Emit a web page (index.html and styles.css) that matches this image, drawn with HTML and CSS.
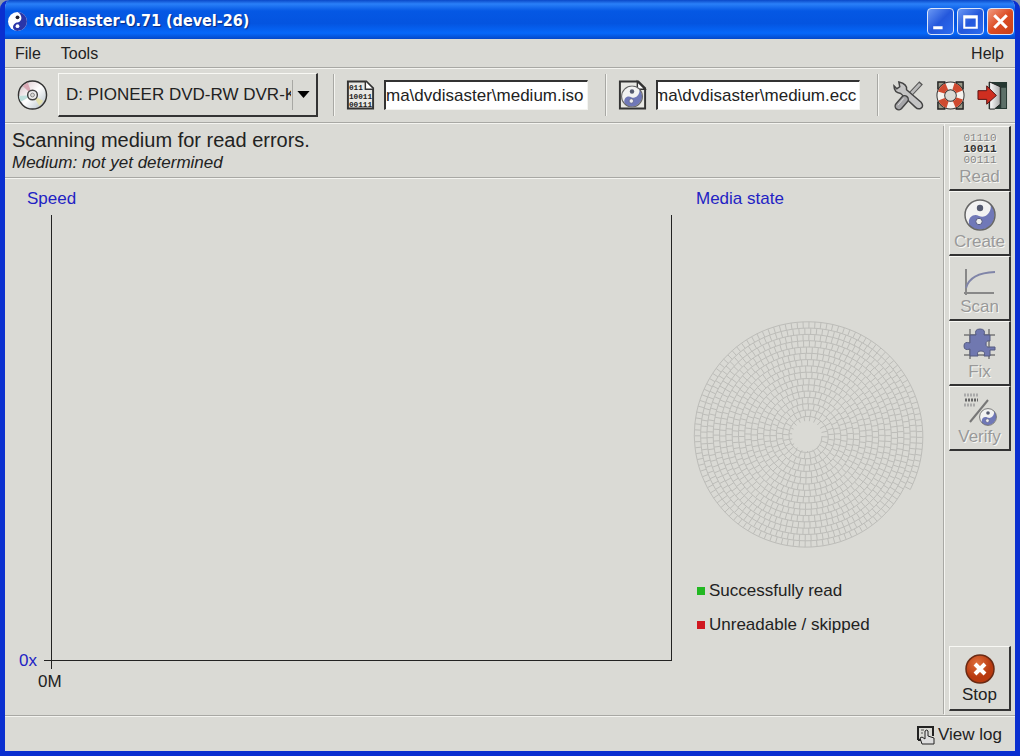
FILE: index.html
```html
<!DOCTYPE html>
<html lang="en">
<head>
<meta charset="utf-8">
<title>dvdisaster-0.71 (devel-26)</title>
<link rel="stylesheet" href="styles.css">
</head>
<body>
<svg class="defs" aria-hidden="true">
  <defs>
    <linearGradient id="disc-shade" x1="0" y1="0" x2="1" y2="1">
      <stop offset="0" stop-color="#aaa"/><stop offset=".25" stop-color="#eadfe2"/>
      <stop offset=".5" stop-color="#fff"/><stop offset=".75" stop-color="#d5dce0"/><stop offset="1" stop-color="#aaa"/>
    </linearGradient>
    <radialGradient id="stop-shade" cx=".4" cy=".3"><stop offset="0" stop-color="#e0703c"/><stop offset="1" stop-color="#b83a10"/></radialGradient>
    <linearGradient id="door-shade"><stop offset="0" stop-color="#fff"/><stop offset="1" stop-color="#aaa"/></linearGradient>
    <symbol id="yin" viewBox="0 0 32 32">
      <circle cx="16" cy="16" r="15" fill="#f2f2f2"/>
      <path d="M26.600 5.400A15 15 0 0 1 5.400 26.600C3 19 9 14 15 17C21 20 28 14 26.600 5.400Z" fill="#7078b8"/>
      <circle cx="16" cy="9" r="3.200" fill="#555a70"/>
      <circle cx="15" cy="22.500" r="3.200" fill="#eee" stroke="#555a80"/>
      <circle cx="16" cy="16" r="15" fill="none" stroke="#666" stroke-width="1.500"/>
    </symbol>
  </defs>
</svg>
<div class="window">
  <header class="titlebar">
    <svg class="app-icon" viewBox="0 0 20 20" aria-hidden="true">
      <circle cx="10" cy="10" r="9" fill="#fff"/>
      <path d="M10 1A9 9 0 0 1 10 19C3 18 6 11 10 11C15 10 15 4 10 1Z" fill="#2a35a8"/>
      <circle cx="10" cy="6" r="1.800" fill="#223"/><circle cx="10" cy="14.500" r="1.800" fill="#fff"/>
    </svg>
    <h1 class="title">dvdisaster-0.71 (devel-26)</h1>
    <div class="window-buttons">
      <button class="win-btn" aria-label="Minimize"><svg viewBox="0 0 24 24"><path d="M5 18h9" stroke="#fff" stroke-width="3"/></svg></button>
      <button class="win-btn" aria-label="Maximize"><svg viewBox="0 0 24 24"><path d="M6 7h12v11H6z M6 8h12" fill="none" stroke="#fff" stroke-width="2"/></svg></button>
      <button class="win-btn close" aria-label="Close"><svg viewBox="0 0 24 24"><path d="M6 6l12 12M18 6L6 18" stroke="#fff" stroke-width="3"/></svg></button>
    </div>
  </header>

  <nav class="menubar">
    <button class="menu">File</button>
    <button class="menu">Tools</button>
    <button class="menu help">Help</button>
  </nav>

  <div class="toolbar">
    <div class="group drive">
      <svg class="icon" viewBox="0 0 32 32" aria-hidden="true">
        <circle cx="16" cy="16" r="14.500" fill="url(#disc-shade)" stroke="#333" stroke-width="1.500"/>
        <path d="M16 16L6 7A14 14 0 0 1 11 3Z" fill="#d9a9b4"/><path d="M16 16L27 22A14 14 0 0 1 23 27Z" fill="#e5e2b0"/><path d="M16 16L2 17A14 14 0 0 0 4 23Z" fill="#bfe0dc"/>
        <circle cx="16" cy="16" r="5" fill="#eee" stroke="#444" stroke-width="1.500"/><circle cx="16" cy="16" r="2" fill="#dadad5" stroke="#888"/>
      </svg>
      <div class="combo">
        <select class="combo-select" aria-label="Drive"><option>D: PIONEER DVD-RW DVR-K</option></select>
        <svg class="combo-arrow" viewBox="0 0 14 8" aria-hidden="true"><path d="M0 0h14L7 8z"/></svg>
      </div>
    </div>
    <div class="group image">
      <svg class="icon" viewBox="0 0 32 32" aria-hidden="true">
        <path d="M3 2h19l7 7v21H3z" fill="#e8e8e4" stroke="#333" stroke-width="2"/>
        <path d="M21 2v8h8" fill="#fff" stroke="#333" stroke-width="1.500"/>
        <g class="bits"><text x="4" y="11">011</text><text x="4" y="20">10011</text><text x="4" y="28">00111</text></g>
      </svg>
      <input class="path" type="text" aria-label="Image file" value="ma\dvdisaster\medium.iso">
    </div>
    <div class="group ecc">
      <svg class="icon" viewBox="0 0 32 32" aria-hidden="true">
        <path d="M3 2h19l7 7v21H3z" fill="#e8e8e4" stroke="#333" stroke-width="2"/>
        <path d="M21 2v8h8z" fill="#fff" stroke="#333" stroke-width="1.500"/>
        <use href="#yin" x="4" y="6" width="23" height="23"/>
      </svg>
      <input class="path ecc-path" type="text" aria-label="Error correction file" value="ma\dvdisaster\medium.ecc">
    </div>
    <div class="group actions">
      <button class="tool" aria-label="Preferences"><svg viewBox="0 0 32 32">
        <path d="M29 3L14 19" stroke="#555" stroke-width="5"/><path d="M28 4L14 19" stroke="#bbb" stroke-width="3"/>
        <path d="M6 2l1 5-3 2-3-3q0 7 7 8l15 14q3 3 6 1t0-6L14 10q1-6-8-8z" fill="#c4c4c4" stroke="#444" stroke-width="1.500"/>
        <path d="M12 20L6 27" stroke="#444" stroke-width="9" stroke-linecap="round"/><path d="M12 20L6 27" stroke="#a5a5a8" stroke-width="6" stroke-linecap="round"/>
        <path d="M11 19L5 26" stroke="#ddd"/>
      </svg></button>
      <button class="tool" aria-label="Manual"><svg viewBox="0 0 32 32">
        <path d="M3 2h7v7H3zM22 2h7v7h-7zM3 23h7v7H3zM22 23h7v7h-7z" fill="#998" stroke="#222" stroke-width="1.500"/>
        <circle cx="16" cy="16" r="10" fill="none" stroke="#333" stroke-width="9"/>
        <circle cx="16" cy="16" r="10" fill="none" stroke="#f6f2ee" stroke-width="7"/>
        <circle cx="16" cy="16" r="10" fill="none" stroke="#cf4a30" stroke-width="7" pathLength="80" stroke-dasharray="11 9" stroke-dashoffset="-4"/>
      </svg></button>
      <button class="tool" aria-label="Quit"><svg viewBox="0 0 32 32">
        <path d="M12 2h19v28H12z" fill="#263832"/><path d="M25 8h5v21h-5z" fill="#5d7068"/>
        <path d="M13 2l11 5v18l-6 5h-5z" fill="url(#door-shade)" stroke="#222"/>
        <path d="M1 11h9V6l10 10-10 9v-5H1z" fill="#cf2e20" stroke="#511"/>
      </svg></button>
    </div>
  </div>

  <div class="body">
    <main class="content">
      <div class="status">
        <h2 class="headline">Scanning medium for read errors.</h2>
        <p class="medium">Medium: not yet determined</p>
      </div>
      <div class="panels">
        <section class="speed">
          <h3 class="panel-title">Speed</h3>
          <div class="chart">
            <span class="y-label">0x</span>
            <div class="plot"></div>
            <span class="x-label">0M</span>
          </div>
        </section>
        <section class="media">
          <h3 class="panel-title">Media state</h3>
          <svg class="spiral" viewBox="0 0 234 234" role="img" aria-label="Media state map"><path id="spiral-path" fill="none" stroke="#bdbdb9"/></svg>
          <ul class="legend">
            <li class="legend-item good">Successfully read</li>
            <li class="legend-item bad">Unreadable / skipped</li>
          </ul>
        </section>
      </div>
    </main>
    <aside class="sidebar">
      <button class="action" disabled>
        <svg viewBox="0 0 36 36" aria-hidden="true"><g class="read-bits"><text x="18" y="10" fill="#888">01110</text><text x="18" y="21" fill="#333" font-weight="bold">10011</text><text x="18" y="32" fill="#888">00111</text></g></svg>
        Read</button>
      <button class="action" disabled>
        <svg viewBox="0 0 36 36" aria-hidden="true"><use href="#yin" x="2" y="3" width="32" height="32"/></svg>
        Create</button>
      <button class="action" disabled>
        <svg viewBox="0 0 36 36" aria-hidden="true"><path d="M4 8v26M2 32h30" fill="none" stroke="#888" stroke-width="2"/><path d="M4 27Q8 12 33 11" fill="none" stroke="#8085a8" stroke-width="2"/></svg>
        Scan</button>
      <button class="action" disabled>
        <svg viewBox="0 0 36 36" aria-hidden="true"><path d="M8 3v30M27 3v30M2 9h31M2 29h31" stroke="#777" stroke-width="1.500"/>
          <path d="M8 9h6q-2-6 4-6t4 6h6v6q-4-1-4 3t4 3h5v3h-5v6h-6q2-5-3-5t-3 5H8v-7q-6 2-6-3t6-3z" fill="#7078b0" stroke="#555b80"/></svg>
        Fix</button>
      <button class="action" disabled>
        <svg viewBox="0 0 36 36" aria-hidden="true"><path d="M2 4h15M2 14h11" stroke="#aaa" stroke-width="3" stroke-dasharray="2 1"/><path d="M3 9h13" stroke="#666" stroke-width="3" stroke-dasharray="2 1"/><path d="M8 31L26 9" stroke="#777" stroke-width="2"/><use href="#yin" x="17" y="17" width="18" height="18"/></svg>
        Verify</button>
      <button class="action stop">
        <svg viewBox="0 0 36 36" aria-hidden="true"><circle cx="18" cy="20" r="14" fill="url(#stop-shade)" stroke="#6a2a14" stroke-width="1.500"/><path d="M13 15l10 10M23 15L13 25" stroke="#fff" stroke-width="4"/></svg>
        Stop</button>
    </aside>
  </div>

  <footer class="footer">
    <button class="log"><svg viewBox="0 0 20 20" aria-hidden="true"><path d="M2 15V2h15v9M2 15h4" fill="none" stroke="#222" stroke-width="2"/><path d="M5 5h3M5 8h2" stroke="#555"/><path d="M6 19l-2-6 2-1 3 2V6q2-2 3 0v5l6 2v6z" fill="#ddd" stroke="#222"/></svg>View log</button>
  </footer>
</div>
<script src="script.js"></script>
</body>
</html>
```
FILE: styles.css
```css
* { box-sizing: border-box; }

body {
  margin: 0;
  background: #8a97ad;
  color: #222;
  font: 17px/20px "Liberation Sans", Arial, sans-serif;
}

button, select, input { font: inherit; color: inherit; }
button { padding: 0; border: 0; background: none; }
h1, h2, h3, p, ul { margin: 0; padding: 0; font-weight: normal; }
svg { display: block; }
.defs { position: absolute; width: 0; height: 0; }

.window {
  display: flex;
  flex-direction: column;
  min-height: 100vh;
  border: solid #0a2fd0;
  border-width: 0 5px 5px;
  border-radius: 9px 9px 0 0;
  background: #dadad5;
  overflow: hidden;
}

.titlebar {
  display: flex;
  align-items: center;
  gap: 6px;
  height: 39px;
  margin: 0 -5px;
  padding: 3px 6px 0 7px;
  background: linear-gradient(#0a48c8, #2a80f8 10%, #0558e4 28%, #0454e0 60%, #0668fa 85%, #0448c8);
}
.app-icon { width: 21px; height: 21px; }
.title {
  flex: 1;
  color: #fff;
  font: bold 16px/24px "DejaVu Sans Condensed", "DejaVu Sans", sans-serif;
  text-shadow: 1px 1px 1px #0a2a80;
}
.window-buttons { display: flex; gap: 3px; }
.win-btn {
  width: 27px;
  height: 27px;
  border: 1px solid #dce6fa;
  border-radius: 4px;
  background: linear-gradient(135deg, #6a98f4, #2458dc 50%, #2c6cf0);
}
.win-btn.close { background: linear-gradient(135deg, #f09a80, #dc4c24 50%, #c84018); }

.menubar {
  display: flex;
  gap: 20px;
  padding: 5px 11px 3px 10px;
  border-bottom: 1px solid #a8a8a4;
  font-size: 16px;
}
.help { margin-left: auto; }

.toolbar {
  display: flex;
  height: 55px;
  border-top: 1px solid #f4f4f0;
  border-bottom: 1px solid #a8a8a4;
}
.group {
  display: flex;
  align-items: center;
  gap: 8px;
  margin: 5px 0 6px;
  padding-left: 11px;
}
.group + .group {
  border-left: 1px solid #a8a8a4;
  box-shadow: inset 1px 0 #f4f4f0;
}
.icon { width: 31px; height: 32px; flex: none; }
.drive { width: 328px; padding: 0 15px 0 12px; gap: 10px; }
.image, .ecc { width: 272px; padding-right: 17px; }
.bits { font: bold 8px "Liberation Mono", monospace; fill: #222; }

.combo { position: relative; flex: 1; min-width: 0; }
.combo-select {
  appearance: none;
  display: block;
  width: 100%;
  height: 44px;
  padding: 0 25px 0 7px;
  border: solid;
  border-width: 1px 2px 2px 1px;
  border-color: #f8f8f4 #333 #333 #f8f8f4;
  border-radius: 0;
  background: linear-gradient(#a8a8a4, #a8a8a4) right 23px center / 1px 30px no-repeat #dadad5;
}
.combo-arrow { position: absolute; right: 8px; top: 18px; width: 13px; height: 7px; pointer-events: none; }

.path {
  flex: 1;
  min-width: 0;
  height: 30px;
  padding: 0;
  border: solid;
  border-width: 2px 1px 1px 2px;
  border-color: #333 #f4f4f0 #f4f4f0 #333;
  border-radius: 0;
  background: #fff;
}
.ecc-path { text-indent: -4px; }

.actions { flex: 1; justify-content: flex-end; gap: 11px; padding-right: 7px; }
.tool, .tool svg { width: 31px; height: 31px; }

.body { flex: 1; display: flex; border-top: 1px solid #f4f4f0; }
.content {
  flex: 1;
  display: flex;
  flex-direction: column;
  margin: 2px 0 1px;
  border-right: 1px solid #a8a8a4;
}
.status {
  margin-right: 3px;
  padding: 2px 7px 4px;
  border-bottom: 1px solid #a8a8a4;
  box-shadow: 0 1px #f4f4f0;
}
.headline { font-size: 20px; line-height: 24px; }
.medium { font-style: italic; line-height: 21px; }

.panels { flex: 1; display: flex; padding: 11px 0 20px; gap: 20px; }
.panel-title { color: #2222c4; font-size: 17px; line-height: 20px; }
.speed { flex: 1; display: flex; flex-direction: column; }
.speed .panel-title { padding-left: 22px; }
.chart {
  flex: 1;
  display: grid;
  grid-template: 1fr 33px / 46px 1fr;
  padding-top: 6px;
}
.y-label { align-self: end; margin-bottom: -10px; padding-left: 14px; color: #2222c4; }
.plot { position: relative; border: solid #222; border-width: 0 1px 1px; }
.plot::before, .plot::after { content: ""; position: absolute; background: #222; }
.plot::before { left: -8px; bottom: -1px; width: 8px; height: 1px; }
.plot::after { left: -1px; bottom: -9px; width: 1px; height: 8px; }
.x-label { grid-column: 2; padding-top: 11px; margin-left: -13px; }

.media { width: 251px; }
.media .panel-title { padding-left: 4px; }
.spiral { width: 234px; height: 234px; margin: 110px 0 28px -2px; }
.legend { display: grid; gap: 14px; padding-left: 5px; list-style: none; }
.legend-item { display: flex; align-items: center; gap: 4px; }
.legend-item::before { content: ""; width: 8px; height: 8px; background: #22b822; }
.legend-item.bad::before { background: #d01820; }

.sidebar {
  display: flex;
  flex-direction: column;
  width: 71px;
  padding: 2px 4px 4px;
  border-left: 1px solid #f4f4f0;
}
.action {
  display: flex;
  flex-direction: column;
  align-items: center;
  height: 65px;
  padding-top: 4px;
  border: solid;
  border-width: 1px 2px 2px 1px;
  border-color: #f8f8f4 #333 #333 #f8f8f4;
}
.action svg { width: 36px; height: 36px; }
.action:disabled { color: #999; text-shadow: 1px 1px #f8f8f4; }
.read-bits { font: 11px "Liberation Mono", monospace; text-anchor: middle; }
.stop { margin-top: auto; padding-top: 2px; }

.footer {
  display: flex;
  justify-content: flex-end;
  padding: 9px 13px 6px;
  border-top: 1px solid #a8a8a4;
  box-shadow: inset 0 1px #f4f4f0;
}
.log { display: flex; align-items: center; gap: 2px; }
.log svg { width: 20px; height: 20px; }
```
FILE: script.js
```js
// Spiral track of cells, starting at the hub and growing clockwise outwards.
const center = 117;
const hub = 15;
const pitch = 6.3;
const cell = 6;
const end = 16 * 2 * Math.PI + 0.52;

const point = (radius, angle) =>
  (center + radius * Math.cos(angle)).toFixed(1) + " " + (center + radius * Math.sin(angle)).toFixed(1);
const radiusAt = (angle) => hub + (pitch * angle) / (2 * Math.PI);

let outline = "M" + point(hub, 0);
let spokes = "";
for (let angle = 0; angle < end; angle += cell / radiusAt(angle)) {
  const radius = radiusAt(angle);
  outline += "L" + point(radius, angle);
  spokes += "M" + point(radius, angle) + "L" + point(Math.max(hub, radius - pitch), angle);
}
document.getElementById("spiral-path").setAttribute("d", outline + spokes);
```
